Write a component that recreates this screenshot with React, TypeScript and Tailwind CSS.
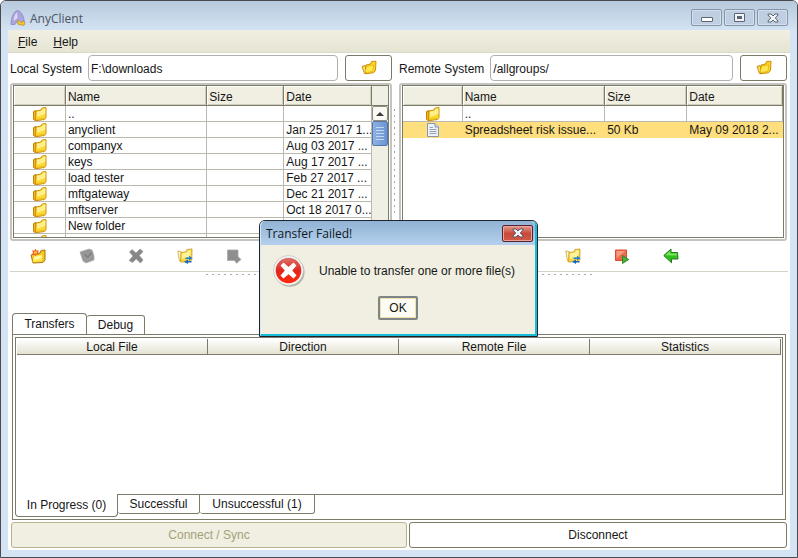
import type { ReactNode } from 'react';

interface FileRow {
  name: string;
  size: string;
  date: string;
  type: 'folder' | 'file';
  selected?: boolean;
}

const localFiles: FileRow[] = [
  { name: '..', size: '', date: '', type: 'folder' },
  { name: 'anyclient', size: '', date: 'Jan 25 2017 1...', type: 'folder' },
  { name: 'companyx', size: '', date: 'Aug 03 2017 ...', type: 'folder' },
  { name: 'keys', size: '', date: 'Aug 17 2017 ...', type: 'folder' },
  { name: 'load tester', size: '', date: 'Feb 27 2017 ...', type: 'folder' },
  { name: 'mftgateway', size: '', date: 'Dec 21 2017 ...', type: 'folder' },
  { name: 'mftserver', size: '', date: 'Oct 18 2017 0...', type: 'folder' },
  { name: 'New folder', size: '', date: '', type: 'folder' },
  { name: '', size: '', date: '', type: 'folder' },
];

const remoteFiles: FileRow[] = [
  { name: '..', size: '', date: '', type: 'folder' },
  { name: 'Spreadsheet risk issue...', size: '50 Kb', date: 'May 09 2018 2...', type: 'file', selected: true },
];

function FolderIcon() {
  return (
    <svg viewBox="0 0 16 16" className="h-4 w-4" aria-hidden="true">
      <path d="M1.5 5.5 L4 4.5 L5 13 L3 14.5 L1.5 13.5 Z" fill="#f3b418" stroke="#b97a06" strokeWidth="0.9" />
      <path d="M3.5 14.8 L4 5 L9 4 L10 2 L14 1.5 L14 11.5 L12.5 13.5 Z" fill="#fbd92e" stroke="#c58606" strokeWidth="0.9" strokeLinejoin="round" />
      <path d="M4.8 5.8 L9.6 4.8 L10.6 2.8 L13.3 2.5 L13.3 8 L5 11 Z" fill="#fff08c" />
      <path d="M4.5 13.6 L12 12.4" stroke="#eeb51a" />
    </svg>
  );
}

// toolbar button variant with the sheet pulled out
function BrowseIcon() {
  return (
    <svg viewBox="0 0 16 16" className="h-4 w-4" aria-hidden="true">
      <path d="M1 6.5 L4 5.5 L6 13.5 L3.5 13.5 Z" fill="#fbe060" stroke="#c58606" strokeWidth="0.9" strokeLinejoin="round" />
      <path d="M4.5 13.8 L5 5 L9.5 4 L10.5 1.5 L15 1.2 L14.5 10.5 L12.5 12.8 Z" fill="#fbd31c" stroke="#c58606" strokeWidth="0.9" strokeLinejoin="round" />
      <path d="M4 12.5 L5.5 6.5 L12.5 5 L12 11.5 Z" fill="#ffe94e" stroke="#dfa716" strokeWidth="0.6" />
    </svg>
  );
}

function FileIcon() {
  return (
    <svg viewBox="0 0 16 16" className="h-4 w-4" aria-hidden="true">
      <path d="M2.5 1.5 H10 L13.5 5 V14.5 H2.5 Z" fill="#eef3fa" stroke="#8a97ab" />
      <path d="M10 1.5 V5 H13.5" fill="#cfdcf0" stroke="#7d92b5" />
      <path d="M4.5 5.5 H8 M4.5 7.5 H11.5 M4.5 9.5 H11.5 M4.5 11.5 H11.5" stroke="#93a0b4" />
    </svg>
  );
}

function NewFolderIcon() {
  return (
    <svg viewBox="0 0 16 16" className="h-4 w-4" aria-hidden="true">
      <path d="M3 15 L1 7 L5 6 L10 5 L11 2.5 L15 2 L15 12 L13 14.5 Z" fill="#f8c51c" stroke="#9d6a08" strokeWidth="0.9" strokeLinejoin="round" />
      <path d="M2.5 14 L4 8 L12.5 6.5 L12 13.3 Z" fill="#ffe94e" />
      <path d="M4 9 L12 7.5 L11.5 10 L4.5 12 Z" fill="#fff7a8" />
      <path d="M5.5 0.8 L6.6 2.6 L8.8 2.4 L8 4.5 L8.8 6.6 L6.6 6.6 L5.5 8.2 L4.2 6.6 L2 6.6 L3 4.5 L2 2.4 L4.3 2.6 Z" fill="#ee5a2c" />
      <circle cx="5.5" cy="4.5" r="1.7" fill="#ffb62e" />
    </svg>
  );
}

function RenameIcon() {
  return (
    <svg viewBox="0 0 16 16" className="h-4 w-4" aria-hidden="true">
      <path d="M1 4 L10 1 L13 2 L15 8 L15 12 L7 15 L4 13 Z" fill="#969696" stroke="#ababab" strokeWidth="0.7" strokeLinejoin="round" />
      <path d="M6 6.5 L8.5 9.5 L13 4.5" fill="none" stroke="#7d7d7d" strokeWidth="1.2" />
      <path d="M6 9 L9 11.5 L12 8" fill="none" stroke="#a8a8a8" strokeWidth="0.8" />
    </svg>
  );
}

function DeleteIcon() {
  return (
    <svg viewBox="0 0 16 16" className="h-4 w-4" aria-hidden="true">
      <path
        d="M4 1.5 L8 5 L12 1 L15 3.5 L11.3 7.5 L15 12 L12.5 15 L8.2 11 L4.5 14.5 L1.2 12.5 L5 8 L1.5 4 Z"
        fill="#878787"
        stroke="#9c9c9c"
        strokeWidth="0.8"
        strokeLinejoin="round"
      />
    </svg>
  );
}

function SyncFolderIcon() {
  return (
    <svg viewBox="0 0 16 16" className="h-4 w-4" aria-hidden="true">
      <path d="M0.8 3 L4 3.5 L5 13.5 L2.5 13 Z" fill="#fffad0" stroke="#cfa536" strokeWidth="0.8" />
      <path d="M3.5 14 L4 4.5 L9 3.8 L10 1.5 L15 1 L14.8 12 L12 13.8 Z" fill="#fbd63c" stroke="#c9971d" strokeWidth="0.8" strokeLinejoin="round" />
      <path d="M4.8 5.5 L10 4.6 L11 2.5 L13.8 2.2 L13.4 8 L5 11 Z" fill="#fff39a" />
      <path d="M8.5 9.5 H12 V7.8 L15.5 10.3 L12 12.4 V11 H8.5 Z" fill="#1d7fe0" />
      <path d="M14.5 13 H11 V11.5 L7 13.8 L11 15.9 V14.6 H14.5 Z" fill="#1668c4" />
    </svg>
  );
}

function TransferOffIcon() {
  return (
    <svg viewBox="0 0 16 16" className="h-4 w-4" aria-hidden="true">
      <path d="M1.5 2 H12 V8.5 L15 11.5 L10.5 15.3 L8.5 12.5 H1.5 Z" fill="#8e8e8e" stroke="#a8a8a8" strokeWidth="0.8" />
    </svg>
  );
}

function StopTransferIcon() {
  return (
    <svg viewBox="0 0 16 16" className="h-4 w-4" aria-hidden="true">
      <path d="M1.5 2 H12.5 V12.5 H1.5 Z" fill="#ec6a4c" stroke="#de4a2c" />
      <path d="M2.5 3 H11.5 L2.5 10 Z" fill="#f69a80" />
      <path d="M8.5 7.5 L14.8 11.5 L8.5 15.5 Z" fill="#3fb636" stroke="#24781f" strokeWidth="0.8" />
    </svg>
  );
}

function BackIcon() {
  return (
    <svg viewBox="0 0 16 16" className="h-4 w-4" aria-hidden="true">
      <path d="M0.8 7.5 L8 1 V4.5 H14.5 L15 11 H8.5 V14.8 Z" fill="#2fc01c" stroke="#23791a" strokeLinejoin="round" />
      <path d="M2.5 7.3 L7.2 3 V5.6 H13.8 V7.4 Z" fill="#7fe562" />
    </svg>
  );
}

function AppLogo() {
  return (
    <svg viewBox="0 0 16 16" className="h-4 w-4" aria-hidden="true">
      <path d="M1 14.5 C1 7 4 1 7.5 0.5 C11 1 14 6 14.5 13 L10.5 14.5 L8 10 L5 14.5 Z" fill="#aaa5dc" stroke="#8d88c6" strokeWidth="0.8" />
      <path d="M3.5 11 C4 6 6 3 7 2.5 L7.5 8 Z" fill="#dcdaf5" />
      <path d="M7 11.5 L9 10.5 L11 12.5 L13 11 L15 13 L14 15.3 L8.5 14.5 Z" fill="#f3c731" stroke="#b98a1c" strokeWidth="0.7" />
    </svg>
  );
}

function ErrorIcon() {
  return (
    <svg viewBox="0 0 32 32" className="h-8 w-8" aria-hidden="true">
      <defs>
        <linearGradient id="errorFill" x1="0" y1="0" x2="0" y2="1">
          <stop offset="0" stopColor="#d9736c" />
          <stop offset="0.5" stopColor="#e3271c" />
          <stop offset="1" stopColor="#ff2a0a" />
        </linearGradient>
      </defs>
      <circle cx="16.8" cy="17" r="14.8" fill="#b4b3ab" />
      <circle cx="15.5" cy="15.5" r="15" fill="#f6f6f6" stroke="#bdbdb8" strokeWidth="0.7" />
      <circle cx="15.5" cy="15.5" r="12.8" fill="url(#errorFill)" />
      <path
        d="M10.5 7.5 L15.5 12 L20.5 7.5 L23.5 10.5 L19.3 15.5 L23.5 20.5 L20.5 23.5 L15.5 19.3 L10.5 23.5 L7.5 20.5 L11.8 15.5 L7.5 10.5 Z"
        fill="#fff"
      />
    </svg>
  );
}

function CloseGlyph({ stroke }: { stroke: string }) {
  return (
    <svg viewBox="0 0 12 10" className="h-[10px] w-3" aria-hidden="true">
      <path d="M1 1 H4 L6 3 L8 1 H11 V2 L8.3 5 L11 8 V9 H8 L6 7 L4 9 H1 V8 L3.7 5 L1 2 Z" fill="#f2f4f7" stroke={stroke} />
    </svg>
  );
}

function WindowButton({ label, children }: { label: string; children: ReactNode }) {
  return (
    <button
      aria-label={label}
      className="flex h-[17px] w-[31px] items-center justify-center rounded-[2px] border border-[#8594ab] bg-[#bfcfe1] shadow-[inset_0_0_0_1px_#d3e0ee]"
    >
      {children}
    </button>
  );
}

interface PathBarProps {
  id: string;
  label: string;
  value: string;
  className: string;
}

function PathBar({ id, label, value, className }: PathBarProps) {
  return (
    <div className={className}>
      <label htmlFor={id} className="shrink-0 pt-[2px] whitespace-nowrap">
        {label}
      </label>
      <input
        id={id}
        defaultValue={value}
        className="ml-[6px] h-[26px] min-w-0 flex-1 rounded-[4px] border border-[#b0b0ac] bg-white px-[2px] pt-[2px] outline-none"
      />
      <button
        aria-label={`Browse ${label}`}
        className="ml-[7px] flex h-[26px] w-[47px] shrink-0 items-center justify-center rounded-[3px] border border-[#7a7a66] bg-white"
      >
        <BrowseIcon />
      </button>
    </div>
  );
}

const headClass =
  'border-r border-b border-[#7b7b68] bg-[#f0efe2] px-[2px] pt-[3px] pb-0 text-left leading-[13px] font-normal shadow-[inset_1px_1px_0_#fff,inset_-1px_-1px_0_#cfcebf]';

const cellClass = 'overflow-hidden border-r border-b px-[2px] pt-[2px] pb-0 leading-[13px] whitespace-nowrap';

function FileTable({ rows, widths, scroll }: { rows: FileRow[]; widths: string[]; scroll?: boolean }) {
  return (
    <div className="rounded-[3px] border-2 border-[#c3c3c0] bg-white px-px pb-px">
      <div className="flex h-[153px] overflow-hidden border border-[#7b7b68]">
        <div className="min-w-0 flex-1 overflow-hidden">
          <table className="w-full table-fixed border-separate border-spacing-0">
            <colgroup>
              {widths.map((width, i) => (
                <col key={i} style={{ width }} />
              ))}
            </colgroup>
            <thead>
              <tr className="h-5">
                <th className={headClass} aria-label="Type" />
                <th className={headClass}>Name</th>
                <th className={headClass}>Size</th>
                <th className={headClass}>Date</th>
              </tr>
            </thead>
            <tbody>
              {rows.map((row, i) => (
                <tr
                  key={i}
                  className={
                    row.selected
                      ? 'h-4 bg-[#ffde7e] [&>td]:border-[#ffde7e]'
                      : 'h-4 bg-white [&>td]:border-[#b9b9ad]'
                  }
                >
                  <td className="h-4 border-r border-b p-0">
                    <div className="-mb-px flex h-4 items-center justify-center pl-[2px]">
                      {row.type === 'folder' ? <FolderIcon /> : <FileIcon />}
                    </div>
                  </td>
                  <td className={cellClass}>{row.name}</td>
                  <td className={cellClass}>{row.size}</td>
                  <td className={cellClass}>{row.date}</td>
                </tr>
              ))}
            </tbody>
          </table>
        </div>
        {scroll && (
          <div className="flex w-4 shrink-0 flex-col bg-[#f0efe4]">
            <div className="h-5 border-b border-[#7b7b68]" />
            <button
              aria-label="Scroll up"
              className="flex h-[15px] items-center justify-center rounded-[2px] border border-[#8f8f7c] bg-[#faf9f3]"
            >
              <svg viewBox="0 0 8 4" className="h-1 w-2" aria-hidden="true">
                <path d="M0 4 L4 0 L8 4 Z" fill="#3c3c3c" />
              </svg>
            </button>
            <div className="flex h-[25px] flex-col items-center justify-center gap-[2px] rounded-[2px] border border-[#5576a6] bg-linear-to-r from-[#8fb1e2] to-[#6a95d2]">
              <span className="h-px w-2 bg-[#c3d8f5]" />
              <span className="h-px w-2 bg-[#c3d8f5]" />
              <span className="h-px w-2 bg-[#c3d8f5]" />
              <span className="h-px w-2 bg-[#c3d8f5]" />
              <span className="h-px w-2 bg-[#c3d8f5]" />
            </div>
          </div>
        )}
      </div>
    </div>
  );
}

function ToolButton({ label, disabled, children }: { label: string; disabled?: boolean; children: ReactNode }) {
  return (
    <button aria-label={label} disabled={disabled} className="flex h-[30px] w-[49px] items-center justify-center">
      {children}
    </button>
  );
}

function TransferFailedDialog() {
  return (
    <div
      role="dialog"
      aria-labelledby="dialog-title"
      className="absolute top-[219px] left-1/2 w-[279px] -translate-x-[140px] rounded-t-[6px] border border-[#1c2430] bg-[#f0efe2]"
    >
      <div className="rounded-t-[5px] border-r-2 border-b-2 border-l border-r-[#16bcd8] border-b-[#16bcd8] border-l-[#d8e8f5]">
        <div className="flex h-6 items-center justify-between rounded-t-[5px] bg-linear-to-b from-[#92b3d5] to-[#b4d0ed] pr-[2px] pl-[5px]">
          <h2 id="dialog-title" className="font-['Open_Sans','Noto_Sans',sans-serif] text-[12px] text-[#101820]">
            Transfer Failed!
          </h2>
          <button
            aria-label="Close"
            className="flex h-[17px] w-[31px] items-center justify-center rounded-[2px] border border-[#5b1f2b] bg-linear-to-b from-[#e09a90] via-[#c9483a] to-[#cf5a49] shadow-[inset_0_0_0_1px_#e5a79f]"
          >
            <CloseGlyph stroke="#5c5563" />
          </button>
        </div>
        <div className="flex h-12 items-center gap-[14px] pt-1 pl-3">
          <ErrorIcon />
          <p className="whitespace-nowrap">Unable to transfer one or more file(s)</p>
        </div>
        <div className="flex h-[41px] items-end justify-center pb-[14px]">
          <button className="h-6 w-10 rounded-[2px] border-2 border-[#7d8587] bg-[#fbfaf3] shadow-[inset_0_0_0_1px_#f1dfae]">
            OK
          </button>
        </div>
      </div>
    </div>
  );
}

export default function App() {
  return (
    <div className="relative flex min-h-screen flex-col rounded-t-[6px] border border-[#4b4b4f] bg-[#d5e4f5] px-[7px] pb-[7px] font-['Liberation_Sans',Arial,sans-serif] text-[12px] leading-[15px] text-[#161616]">
      <header className="-mx-[7px] flex h-[29px] items-center rounded-t-[5px] bg-linear-to-b from-[#b7c9dc] to-[#d3e3f3] pt-2 pr-[9px] pb-1 pl-[9px]">
        <AppLogo />
        <h1 className="ml-1 flex-1 pt-[2px] font-['Open_Sans','Noto_Sans',sans-serif] text-[12px] text-[#4a5560]">AnyClient</h1>
        <div className="flex gap-[2px]">
          <WindowButton label="Minimize">
            <span className="mt-1 h-[5px] w-3 rounded-[1px] border border-[#5b6575] bg-white" />
          </WindowButton>
          <WindowButton label="Maximize">
            <span className="h-[9px] w-[11px] rounded-[1px] border border-[#5b6575] bg-[#5b6575] shadow-[inset_0_0_0_2px_#f2f4f7]" />
          </WindowButton>
          <WindowButton label="Close window">
            <CloseGlyph stroke="#5b6575" />
          </WindowButton>
        </div>
      </header>

      <main className="flex flex-1 flex-col bg-white">
        <nav className="flex h-[23px] items-center gap-4 border-b border-[#d9d8ca] bg-linear-to-b from-[#f0efe2] to-[#e6e5d3] px-[10px] pt-[3px]">
          <button>
            <span className="underline">F</span>ile
          </button>
          <button>
            <span className="underline">H</span>elp
          </button>
        </nav>

        <div className="grid grid-cols-[389fr_393fr]">
          <section>
            <PathBar id="local" label="Local System" value="F:\downloads" className="flex h-[30px] items-center pr-[5px] pl-[2px]" />
            <div className="flex">
              <div className="min-w-0 flex-1 pl-[2px]">
                <FileTable rows={localFiles} widths={['14.5%', '39.5%', '21.5%', '24.5%']} scroll />
              </div>
              <div className="my-6 w-[5px] bg-[radial-gradient(#a9a9a9_1px,transparent_1px)] bg-size-[5px_6px]" />
            </div>
          </section>
          <section>
            <PathBar id="remote" label="Remote System" value="/allgroups/" className="flex h-[30px] items-center pr-[3px] pl-[2px]" />
            <div className="pr-[3px] pl-[2px]">
              <FileTable rows={remoteFiles} widths={['15.7%', '37.5%', '21.6%', '25.2%']} />
            </div>
          </section>
        </div>

        <div className="mx-[2px] grid grid-cols-[389fr_393fr] border-b border-[#d3d3c8]">
          <div className="flex pl-[3px]">
            <ToolButton label="New local folder">
              <NewFolderIcon />
            </ToolButton>
            <ToolButton label="Rename local" disabled>
              <RenameIcon />
            </ToolButton>
            <ToolButton label="Delete local" disabled>
              <DeleteIcon />
            </ToolButton>
            <ToolButton label="Refresh local">
              <SyncFolderIcon />
            </ToolButton>
            <ToolButton label="Upload" disabled>
              <TransferOffIcon />
            </ToolButton>
          </div>
          <div className="flex pl-1">
            <ToolButton label="New remote folder">
              <NewFolderIcon />
            </ToolButton>
            <ToolButton label="Rename remote">
              <RenameIcon />
            </ToolButton>
            <ToolButton label="Delete remote">
              <DeleteIcon />
            </ToolButton>
            <ToolButton label="Refresh remote">
              <SyncFolderIcon />
            </ToolButton>
            <ToolButton label="Cancel transfer">
              <StopTransferIcon />
            </ToolButton>
            <ToolButton label="Download">
              <BackIcon />
            </ToolButton>
          </div>
        </div>
        <div className="mx-auto h-[5px] w-[390px] bg-[radial-gradient(#a9a9a9_1px,transparent_1px)] bg-size-[6px_5px]" />

        <section className="mt-9 flex flex-1 flex-col px-1">
          <div role="tablist" className="-mb-px flex items-end">
            <button
              role="tab"
              aria-selected="true"
              className="h-[22px] min-w-[75px] rounded-t-[4px] border border-b-0 border-[#7b7b68] bg-white px-[10px]"
            >
              Transfers
            </button>
            <button
              role="tab"
              aria-selected="false"
              className="h-5 min-w-[58px] rounded-t-[3px] border border-l-0 border-[#7b7b68] bg-white px-[10px]"
            >
              Debug
            </button>
          </div>
          <div className="flex flex-1 flex-col border border-[#7b7b68] px-[2px] pt-[2px] pb-[2px]">
            <div className="min-h-[158px] flex-1 border border-[#7b7b68] p-px">
              <table className="w-full table-fixed border-separate border-spacing-0">
                <thead>
                  <tr className="h-4">
                    {['Local File', 'Direction', 'Remote File', 'Statistics'].map((title) => (
                      <th
                        key={title}
                        className="border-r border-b border-[#7b7b68] bg-linear-to-b from-white to-[#e4e3d3] p-0 pt-px leading-[14px] font-normal"
                      >
                        {title}
                      </th>
                    ))}
                  </tr>
                </thead>
              </table>
            </div>
            <div role="tablist" className="-mt-px flex items-start">
              <button
                role="tab"
                aria-selected="true"
                className="h-[23px] min-w-[103px] rounded-b-[4px] border border-t-0 border-[#7b7b68] bg-white px-[10px]"
              >
                In Progress (0)
              </button>
              <button
                role="tab"
                aria-selected="false"
                className="h-5 min-w-[82px] rounded-b-[3px] border border-l-0 border-[#7b7b68] px-[10px]"
              >
                Successful
              </button>
              <button
                role="tab"
                aria-selected="false"
                className="h-5 min-w-[115px] rounded-b-[3px] border border-l-0 border-[#7b7b68] px-[10px]"
              >
                Unsuccessful (1)
              </button>
            </div>
          </div>
        </section>

        <div className="grid grid-cols-[396fr_378fr] gap-[2px] px-[3px] pt-[2px] pb-[2px]">
          <button disabled className="h-[26px] rounded-[3px] border border-[#b5b48c] bg-[#f0efe2] text-[#a3a279]">
            Connect / Sync
          </button>
          <button className="h-[26px] rounded-[3px] border border-[#7b7b68] bg-white">Disconnect</button>
        </div>
      </main>

      <TransferFailedDialog />
    </div>
  );
}
